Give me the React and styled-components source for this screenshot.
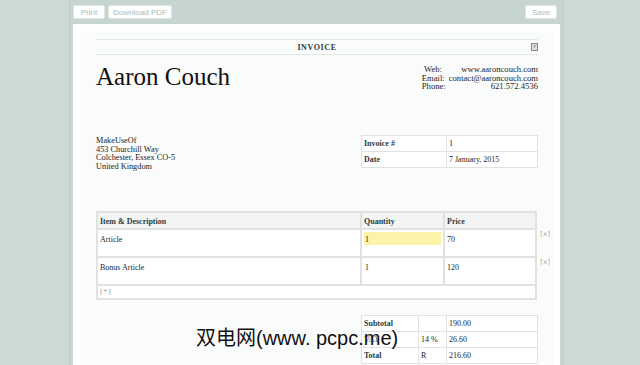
import React from "react";
import styled, { createGlobalStyle } from "styled-components";

const GlobalStyle = createGlobalStyle`
    html, body {
        margin: 0;
        padding: 0;
        background: #cdd9d5;
    }
    * {
        box-sizing: border-box;
    }
`;

const Page = styled.div`
    position: relative;
    width: 640px;
    height: 365px;
    overflow: hidden;
    background: #cdd9d5;
    font-family: "Liberation Serif", "Times New Roman", serif;
    color: #1e1e1e;
`;

const Shell = styled.div`
    margin-left: 69px;
    width: 495px;
    height: 365px;
    background: #c7d5d1;
    border-left: 1px solid #bfcdc9;
    border-right: 1px solid #bfcdc9;
    padding: 0 3px;
    display: flex;
    flex-direction: column;
`;

const Toolbar = styled.div`
    flex-shrink: 0;
    height: 24px;
    padding-top: 5px;
    display: flex;
    align-items: flex-start;
    gap: 3px;
`;

const ToolButton = styled.button`
    height: 14px;
    width: ${(props) => props.w}px;
    margin-left: ${(props) => (props.push ? "auto" : "0")};
    margin-right: ${(props) => (props.push ? "3px" : "0")};
    padding: 0;
    background: #fff;
    border: 1px solid #dfe6e4;
    border-radius: 2px;
    font-family: "Liberation Sans", Arial, sans-serif;
    font-size: 8px;
    color: #a8bcbb;
`;

const Paper = styled.div`
    flex: 1;
    min-height: 0;
    overflow: hidden;
    background: #fff;
    padding: 7px 7px 0 7px;
    display: flex;
`;

const Sheet = styled.div`
    flex: 1;
    background: #fafbfb;
    padding: 8px 15px 0 16px;
`;

const TitleBar = styled.div`
    position: relative;
    height: 16px;
    border-top: 1px solid #e3e7e6;
    border-bottom: 1px solid #e3e7e6;
    display: flex;
    align-items: center;
    justify-content: center;
    font-size: 8px;
    font-weight: bold;
    letter-spacing: 0.6px;
    color: #2c3d3d;
`;

const HelpBox = styled.span`
    position: absolute;
    right: 0;
    top: 3px;
    width: 7px;
    height: 8px;
    border: 1px solid #888;
    background: #ddd;
    font-size: 5px;
    line-height: 6px;
    text-align: center;
    color: #555;
    letter-spacing: 0;
`;

const Header = styled.div`
    display: flex;
    justify-content: space-between;
    align-items: flex-start;
    margin-top: 7px;
    height: 73px;
`;

const Name = styled.h1`
    margin: 0;
    font-weight: normal;
    font-size: 25px;
    line-height: 30px;
    color: #111;
`;

const Contact = styled.div`
    display: grid;
    grid-template-columns: auto auto;
    column-gap: 3px;
    font-size: 8.6px;
    line-height: 8.6px;
    margin-top: 3px;
`;

const ContactLabel = styled.span`
    text-align: left;
`;

const ContactValue = styled.span`
    text-align: right;
`;

const InfoRow = styled.div`
    display: flex;
    justify-content: space-between;
    align-items: flex-start;
    height: 76px;
`;

const Address = styled.div`
    padding-top: 2px;
    font-size: 8.3px;
    line-height: 8.7px;
    color: #222;
`;

const Table = styled.table`
    border-collapse: collapse;
    width: ${(props) => props.w}px;
    font-size: 8px;
    background: #fff;
    td, th {
        border: 1px solid #e0e2e2;
        text-align: left;
        padding: 0 2px;
        vertical-align: ${(props) => props.valign || "middle"};
    }
`;

const Label = styled.td`
    font-weight: bold;
    color: #2c3d3d;
    width: ${(props) => props.w}px;
`;

const MetaRow = styled.tr`
    height: 16px;
`;

const ItemsWrap = styled.div`
    position: relative;
`;

const HeadCell = styled.th`
    width: ${(props) => (props.w ? `${props.w}px` : "auto")};
    background: #f3f4f4;
    font-weight: bold;
    color: #2c3d3d;
    border-width: 2px !important;
    vertical-align: middle !important;
    padding-top: 1px !important;
`;

const HeadRow = styled.tr`
    height: 17px;
`;

const ItemRow = styled.tr`
    height: 28px;
    td {
        padding-top: 5px;
        border-width: 2px;
    }
`;

const AddRow = styled.tr`
    height: 14px;
    td {
        color: #7a7f85;
        font-size: 7px;
        letter-spacing: 1px;
        padding-top: 1px;
        border-width: 2px;
    }
`;

const QtyInput = styled.div`
    margin: -3px 0 0 0;
    height: 13px;
    padding: 3px 1px 0;
    background: ${(props) => (props.hl ? "#fbf4a8" : "transparent")};
`;

const Remove = styled.span`
    position: absolute;
    right: -13px;
    top: ${(props) => props.top}px;
    font-family: "DejaVu Sans Mono", monospace;
    font-size: 6.5px;
    color: #9a9a9a;
`;

const Totals = styled.div`
    display: flex;
    justify-content: flex-end;
    margin-top: 15px;
`;

const Watermark = styled.div`
    position: absolute;
    left: 196px;
    top: 326px;
    font-family: "Liberation Sans", "Noto Sans CJK SC", sans-serif;
    font-size: 20px;
    line-height: 24px;
    color: #111;
    text-shadow: 0 0 2px #fff, 0 0 2px #fff;
    white-space: pre;
`;

function App() {
    return (
        <Page>
            <GlobalStyle />
            <Shell>
                <Toolbar>
                    <ToolButton w={32}>Print</ToolButton>
                    <ToolButton w={64}>Download PDF</ToolButton>
                    <ToolButton w={32} push>
                        Save
                    </ToolButton>
                </Toolbar>
                <Paper>
                    <Sheet>
                        <TitleBar>
                            INVOICE
                            <HelpBox>?</HelpBox>
                        </TitleBar>
                        <Header>
                            <Name>Aaron Couch</Name>
                            <Contact>
                                <ContactLabel>&nbsp;Web:</ContactLabel>
                                <ContactValue>www.aaroncouch.com</ContactValue>
                                <ContactLabel>Email:</ContactLabel>
                                <ContactValue>contact@aaroncouch.com</ContactValue>
                                <ContactLabel>Phone:</ContactLabel>
                                <ContactValue>621.572.4536</ContactValue>
                            </Contact>
                        </Header>
                        <InfoRow>
                            <Address>
                                MakeUseOf
                                <br />
                                453 Churchill Way
                                <br />
                                Colchester, Essex CO-5
                                <br />
                                United Kingdom
                            </Address>
                            <Table w={177}>
                                <tbody>
                                    <MetaRow>
                                        <Label w={85}>Invoice #</Label>
                                        <td>1</td>
                                    </MetaRow>
                                    <MetaRow>
                                        <Label w={85}>Date</Label>
                                        <td>7 January, 2015</td>
                                    </MetaRow>
                                </tbody>
                            </Table>
                        </InfoRow>
                        <ItemsWrap>
                            <Table w={441} valign="top">
                                <thead>
                                    <HeadRow>
                                        <HeadCell w={264}>Item &amp; Description</HeadCell>
                                        <HeadCell w={83}>Quantity</HeadCell>
                                        <HeadCell>Price</HeadCell>
                                    </HeadRow>
                                </thead>
                                <tbody>
                                    <ItemRow>
                                        <td>Article</td>
                                        <td>
                                            <QtyInput hl>1</QtyInput>
                                        </td>
                                        <td>70</td>
                                    </ItemRow>
                                    <ItemRow>
                                        <td>Bonus Article</td>
                                        <td>
                                            <QtyInput>1</QtyInput>
                                        </td>
                                        <td>120</td>
                                    </ItemRow>
                                    <AddRow>
                                        <td colSpan={3}>[+]</td>
                                    </AddRow>
                                </tbody>
                            </Table>
                            <Remove top={19}>[x]</Remove>
                            <Remove top={47}>[x]</Remove>
                        </ItemsWrap>
                        <Totals>
                            <Table w={177}>
                                <tbody>
                                    <MetaRow>
                                        <Label w={57}>Subtotal</Label>
                                        <td style={{ width: 28 }}></td>
                                        <td>190.00</td>
                                    </MetaRow>
                                    <MetaRow>
                                        <Label w={57}>VAT</Label>
                                        <td>14 %</td>
                                        <td>26.60</td>
                                    </MetaRow>
                                    <MetaRow>
                                        <Label w={57}>Total</Label>
                                        <td>R</td>
                                        <td>216.60</td>
                                    </MetaRow>
                                </tbody>
                            </Table>
                        </Totals>
                    </Sheet>
                </Paper>
            </Shell>
            <Watermark>双电网(www. pcpc.me)</Watermark>
        </Page>
    );
}

export default App;
